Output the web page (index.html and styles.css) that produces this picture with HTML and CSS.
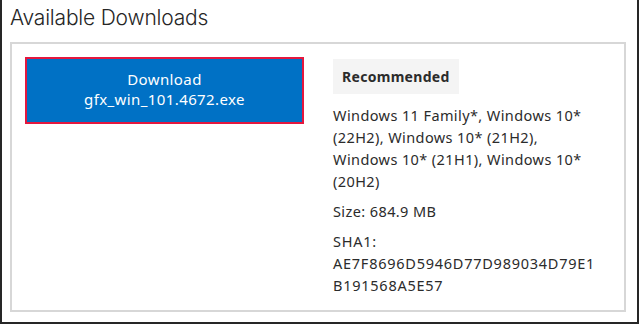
FILE: index.html
```html
<!DOCTYPE html>
<html lang="en">
<head>
    <meta charset="UTF-8">
    <title>Available Downloads</title>
    <meta name="viewport" content="width=device-width, initial-scale=1.0">
    <link rel="stylesheet" href="styles.css">
</head>
<body>
    <div class="frame">
        <h2 class="title">Available Downloads</h2>
        <div class="download-box">
            <div class="download-col">
                <a href="#" class="download-button">Download<br>gfx_win_101.4672.exe</a>
            </div>
            <div class="info-col">
                <span class="badge">Recommended</span>
                <p class="info">Windows 11 Family*, Windows 10* (22H2), Windows 10* (21H2), Windows 10* (21H1), Windows 10* (20H2)</p>
                <p class="info">Size: 684.9 MB</p>
                <p class="info hash">SHA1:<br>AE7F8696D5946D77D989034D79E1B191568A5E57</p>
            </div>
        </div>
    </div>
</body>
</html>
```

FILE: styles.css
```css
body {
    margin: 0;
    font-family: "Noto Sans", "Open Sans", Arial, sans-serif;
    background-color: white;
    color: #2b2b2b;
}
.frame {
    height: 322px;
    border-left: 2px solid #262626;
    border-right: 2px solid #262626;
    border-bottom: 2px solid #262626;
    padding: 0 11px 0 8px;
}
.title {
    margin: 0;
    padding-top: 5px;
    height: 37px;
    font-family: Inter, "Open Sans", sans-serif;
    font-weight: 300;
    font-size: 21px;
    letter-spacing: -0.2px;
    color: #262626;
}
.download-box {
    border: 2px solid #d7d7d7;
    padding: 13px 13px;
    display: grid;
    grid-template-columns: 279px 266px;
    gap: 29px;
    box-sizing: border-box;
    height: 270px;
}
.download-button {
    display: block;
    height: 67px;
    box-sizing: border-box;
    border: 2px solid #e4173e;
    background-color: #0071c5;
    color: white;
    text-decoration: none;
    text-align: center;
    font-size: 15px;
    letter-spacing: 0.4px;
    line-height: 20px;
    padding-top: 10px;
}
.badge {
    display: inline-block;
    background-color: #f4f4f4;
    font-weight: bold;
    font-size: 14px;
    letter-spacing: 0.3px;
    padding: 8px 9px;
    margin-top: 2px;
    line-height: 19px;
}
.info {
    margin: 10px 0 0;
    font-size: 14.5px;
    letter-spacing: 0.4px;
    line-height: 22px;
}
.info + .info {
    margin-top: 8px;
}
.hash {
    word-break: break-all;
    letter-spacing: 0.75px;
}
```
